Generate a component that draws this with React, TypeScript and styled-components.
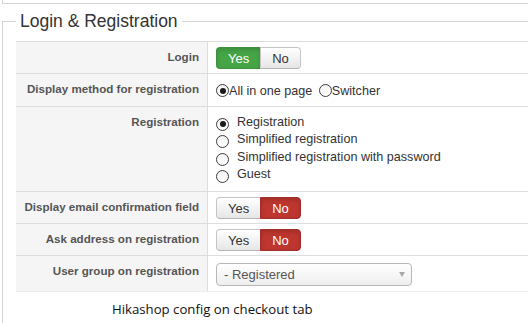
import React from "react";
import styled, { createGlobalStyle, css } from "styled-components";

const GlobalStyle = createGlobalStyle`
    html, body {
        margin: 0;
        padding: 0;
        overflow: hidden;
        background: #fff;
    }
    body {
        font-family: "Liberation Sans", Arial, Helvetica, sans-serif;
        color: #333;
    }
`;

const colors = {
    line: "#d4d4d4",
    rowLine: "#dddddd",
    labelBg: "#f5f5f5",
    label: "#555555",
    text: "#333333",
    green: "#46a546",
    red: "#bd362f",
};

type Option = { label: string; checked?: boolean };

const App = () => {
    return (
        <>
            <GlobalStyle />
            <Page>
                <TopEdge />
                <Fieldset>
                    <Legend>Login &amp; Registration</Legend>
                    <Table>
                        <Row>
                            <Label>Login</Label>
                            <Value>
                                <Toggle value="yes" />
                            </Value>
                        </Row>
                        <Row>
                            <Label>Display method for registration</Label>
                            <Value>
                                <InlineRadios>
                                    <RadioMark $checked />
                                    <span>All in one page </span>
                                    <RadioMark />
                                    <span>Switcher</span>
                                </InlineRadios>
                            </Value>
                        </Row>
                        <Row>
                            <Label>Registration</Label>
                            <Value>
                                <RadioList>
                                    {registrationOptions.map((o) => (
                                        <RadioItem key={o.label}>
                                            <RadioMark $checked={o.checked} />
                                            <span>{o.label}</span>
                                        </RadioItem>
                                    ))}
                                </RadioList>
                            </Value>
                        </Row>
                        <Row>
                            <Label>Display email confirmation field</Label>
                            <Value>
                                <Toggle value="no" />
                            </Value>
                        </Row>
                        <Row>
                            <Label>Ask address on registration</Label>
                            <Value>
                                <Toggle value="no" />
                            </Value>
                        </Row>
                        <Row $last>
                            <Label>User group on registration</Label>
                            <Value>
                                <Select>
                                    <span>- Registered</span>
                                    <Caret />
                                </Select>
                            </Value>
                        </Row>
                    </Table>
                    <Caption>Hikashop config on checkout tab</Caption>
                </Fieldset>
            </Page>
        </>
    );
};

const registrationOptions: Option[] = [
    { label: "Registration", checked: true },
    { label: "Simplified registration" },
    { label: "Simplified registration with password" },
    { label: "Guest" },
];

const Toggle = ({ value }: { value: "yes" | "no" }) => (
    <ButtonGroup>
        <ToggleButton $active={value === "yes" ? "yes" : undefined}>Yes</ToggleButton>
        <ToggleButton $active={value === "no" ? "no" : undefined}>No</ToggleButton>
    </ButtonGroup>
);

const Page = styled.div`
    padding-left: 2px;
`;

const TopEdge = styled.div`
    height: 3px;
    border-left: 1px solid ${colors.line};
    border-bottom: 1px solid ${colors.line};
`;

const Fieldset = styled.fieldset`
    margin: 6px 0 0 0;
    padding: 0 0 5px 13px;
    border: 1px solid ${colors.line};
    border-right: none;
    border-bottom: none;
`;

const Legend = styled.legend`
    padding: 0 4px;
    font-size: 17.5px;
    line-height: 22px;
    color: ${colors.text};
`;

const Table = styled.div`
    margin-top: 9px;
    border-top: 1px solid ${colors.rowLine};
`;

const Row = styled.div<{ $last?: boolean }>`
    display: grid;
    grid-template-columns: 192px 1fr;
    border-bottom: 1px solid ${colors.rowLine};
    ${(p) =>
        p.$last &&
        css`
            border-bottom-color: #eeeeee;
        `}
`;

const Label = styled.div`
    background: ${colors.labelBg};
    border-right: 1px solid ${colors.rowLine};
    padding: 5px 8px 4px 0;
    text-align: right;
    font-size: 11.6px;
    font-weight: bold;
    line-height: 20px;
    color: ${colors.label};
    white-space: nowrap;
`;

const Value = styled.div`
    padding: 5px 8px 4px 8px;
    font-size: 12.6px;
    color: ${colors.text};
`;

const ButtonGroup = styled.div`
    display: inline-flex;
`;

const ToggleButton = styled.span<{ $active?: "yes" | "no" }>`
    display: inline-block;
    height: 22px;
    line-height: 22px;
    padding: 0 11px;
    font-size: 13px;
    color: #333;
    background: linear-gradient(#ffffff, #e6e6e6);
    border: 1px solid #c5c5c5;
    border-bottom-color: #b3b3b3;
    box-sizing: border-box;
    &:first-child {
        border-radius: 4px 0 0 4px;
        border-right: none;
    }
    &:last-child {
        border-radius: 0 4px 4px 0;
    }
    ${(p) =>
        p.$active === "yes" &&
        css`
            color: #fff;
            background: ${colors.green};
            border-color: #3f8f3f;
            box-shadow: inset 0 2px 4px rgba(0, 0, 0, 0.15);
        `}
    ${(p) =>
        p.$active === "no" &&
        css`
            color: #fff;
            background: ${colors.red};
            border-color: #a12e28;
            box-shadow: inset 0 2px 4px rgba(0, 0, 0, 0.15);
        `}
`;

const RadioMark = styled.span<{ $checked?: boolean }>`
    display: inline-block;
    position: relative;
    width: 13px;
    height: 13px;
    box-sizing: border-box;
    border: 1px solid #3c3c3c;
    border-radius: 50%;
    background: linear-gradient(#f2f2f2, #ffffff);
    flex: none;
    ${(p) =>
        p.$checked &&
        css`
            &::after {
                content: "";
                position: absolute;
                left: 2.5px;
                top: 2.5px;
                width: 6px;
                height: 6px;
                border-radius: 50%;
                background: #1a1a1a;
            }
        `}
`;

const InlineRadios = styled.div`
    display: flex;
    align-items: center;
    height: 23px;
    white-space: pre;
    > span:nth-child(2) {
        margin-right: 3px;
    }
`;

const RadioList = styled.div`
    display: flex;
    flex-direction: column;
    padding: 1px 0 4px;
`;

const RadioItem = styled.div`
    display: flex;
    align-items: center;
    gap: 8px;
    height: 17.5px;
    > span:first-child {
        margin-top: 5px;
    }
`;

const Select = styled.div`
    display: flex;
    align-items: center;
    justify-content: space-between;
    box-sizing: border-box;
    width: 196px;
    height: 23px;
    margin: 2px 0 1px;
    padding: 0 6px 0 7px;
    border: 1px solid #b8b8b8;
    border-radius: 4px;
    background: linear-gradient(#ffffff, #eeeeee);
    font-size: 13px;
    color: #555;
`;

const Caret = styled.span`
    width: 0;
    height: 0;
    border-left: 3px solid transparent;
    border-right: 3px solid transparent;
    border-top: 5px solid #a8a8a8;
`;

const Caption = styled.div`
    margin-top: 8px;
    padding-left: 96px;
    font-family: "Open Sans", "Liberation Sans", sans-serif;
    font-size: 13.2px;
    line-height: 18px;
    color: #111;
`;

export default App;
